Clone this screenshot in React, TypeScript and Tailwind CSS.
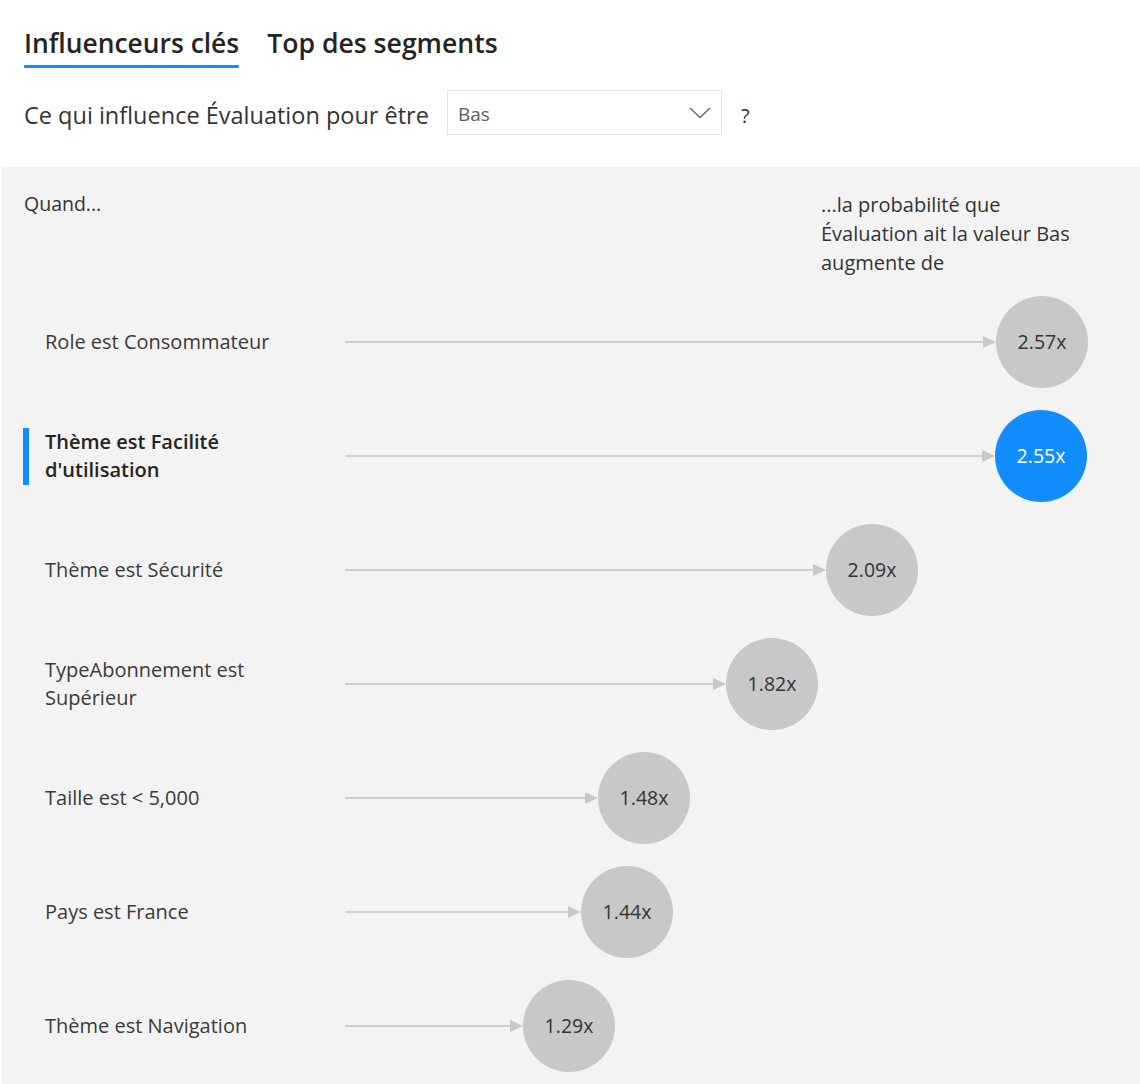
import React from "react";

const rows = [
  { label: "Role est Consommateur", value: "2.57x", cx: 1042, selected: false },
  { label: "Thème est Facilité d'utilisation", value: "2.55x", cx: 1041, selected: true },
  { label: "Thème est Sécurité", value: "2.09x", cx: 872, selected: false },
  { label: "TypeAbonnement est Supérieur", value: "1.82x", cx: 772, selected: false },
  { label: "Taille est < 5,000", value: "1.48x", cx: 644, selected: false },
  { label: "Pays est France", value: "1.44x", cx: 627, selected: false },
  { label: "Thème est Navigation", value: "1.29x", cx: 569, selected: false },
];

const LINE_START = 345;
const R = 46;
const ARROW = 13;

export default function App() {
  return (
    <div
      className="w-[1140px] h-[1084px] overflow-hidden bg-white text-[#252423]"
      style={{ fontFamily: '"Open Sans", "Noto Sans", sans-serif' }}
    >
      {/* Tabs */}
      <div className="flex gap-[28px] pl-[24px] pt-[24px] h-[69px]">
        <div className="flex flex-col">
          <span className="text-[26.4px] leading-[38px] font-semibold">Influenceurs clés</span>
          <span className="mt-[3px] h-[3px] bg-[#118DFF] rounded-[1px]" />
        </div>
        <span className="text-[26.6px] leading-[38px] font-semibold">Top des segments</span>
      </div>

      {/* Question row */}
      <div className="flex pl-[24px] pt-[21px] h-[98px] items-start">
        <span className="text-[23.5px] leading-[45px] text-[#333] translate-y-[3px]">Ce qui influence Évaluation pour être</span>
        <div className="ml-[18px] w-[275px] h-[45px] border border-[#e3e3e3] flex items-center justify-between pl-[10px] pr-[10px]">
          <span className="text-[19px] text-[#605e5c] translate-y-[2px]">Bas</span>
          <svg width="22" height="12" viewBox="0 0 22 12" fill="none">
            <path d="M1 1 L11 10.5 L21 1" stroke="#666" strokeWidth="1.4" />
          </svg>
        </div>
        <span className="ml-[19px] text-[20px] leading-[45px] text-[#333] translate-y-[3px]">?</span>
      </div>

      {/* Panel */}
      <div className="ml-[2px] bg-[#f3f3f3] h-[917px] relative">
        <div className="absolute left-[22px] top-[24px] text-[19.5px] leading-[26px] text-[#333]">Quand...</div>
        <div className="absolute left-[819px] top-[23px] text-[20px] leading-[29px] text-[#333]">
          <div>...la probabilité que</div>
          <div>Évaluation ait la valeur Bas</div>
          <div>augmente de</div>
        </div>
        <div className="pt-[118px] -ml-[2px]">
          {rows.map((r) => {
            const circleLeft = r.cx - R;
            const lineWidth = circleLeft - ARROW - LINE_START;
            return (
              <div key={r.label} className="flex items-center h-[114px]">
                <div className="w-[345px] flex items-center h-full">
                  <div className={`w-[6px] ml-[23px] h-[57px] ${r.selected ? "bg-[#118DFF]" : ""}`} />
                  <div
                    className={`ml-[16px] w-[250px] text-[20px] leading-[28px] ${
                      r.selected ? "font-semibold text-[#252423]" : "text-[#3b3a39]"
                    }`}
                  >
                    {r.label}
                  </div>
                </div>
                <div className="h-[2px] bg-[#cfcfcf]" style={{ width: lineWidth }} />
                <svg width={ARROW} height="14" viewBox="0 0 13 14" className="shrink-0">
                  <path d="M0 1 L13 7 L0 13 Z" fill="#c8c8c8" />
                </svg>
                <div
                  className={`w-[92px] h-[92px] rounded-full shrink-0 flex items-center justify-center text-[19.5px] ${
                    r.selected ? "bg-[#118DFF] text-white" : "bg-[#c8c8c8] text-[#333]"
                  }`}
                >
                  {r.value}
                </div>
              </div>
            );
          })}
        </div>
      </div>
    </div>
  );
}
